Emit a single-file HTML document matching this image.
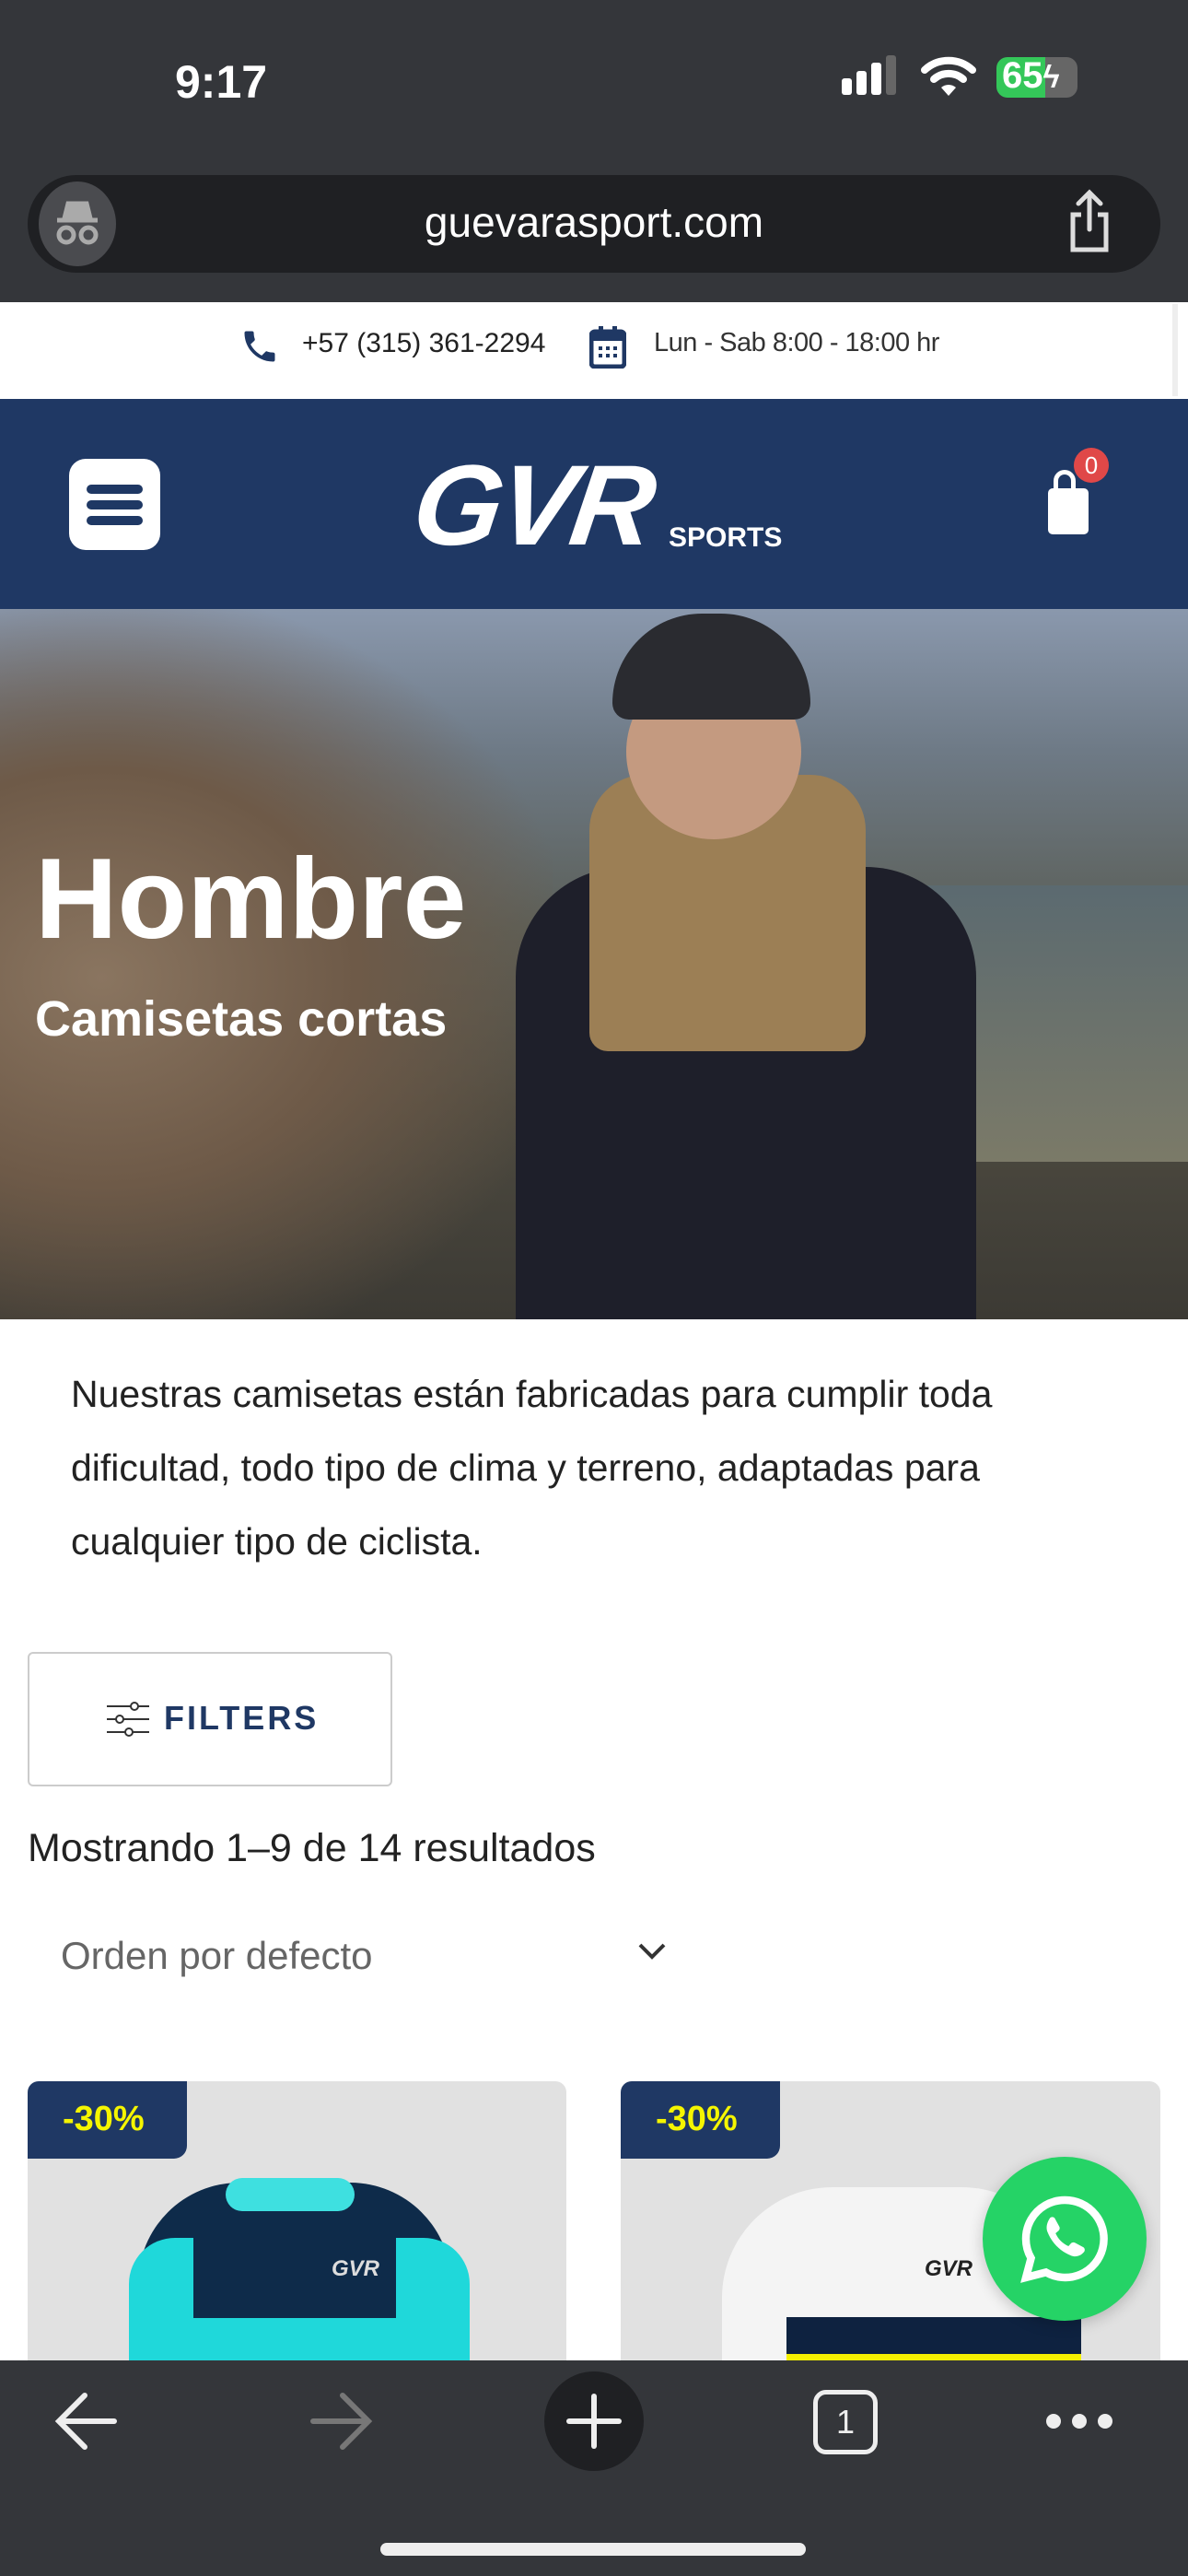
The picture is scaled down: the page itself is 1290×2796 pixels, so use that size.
<!DOCTYPE html>
<html><head><meta charset="utf-8"><style>
*{margin:0;padding:0;box-sizing:border-box}
body{width:1290px;height:2796px;position:relative;overflow:hidden;background:#fff;font-family:"Liberation Sans",sans-serif}
.abs{position:absolute}
</style></head><body>
<div class="abs" style="left:0;top:0;width:1290px;height:328px;background:#34363a"></div>
<div class="abs" style="left:190px;top:60px;font-size:50px;color:#fff;font-weight:600">9:17</div>
<div class="abs" style="left:914px;top:85px;width:11px;height:18px;background:#fff;border-radius:3px"></div>
<div class="abs" style="left:930px;top:77px;width:11px;height:26px;background:#fff;border-radius:3px"></div>
<div class="abs" style="left:946px;top:68px;width:11px;height:35px;background:#fff;border-radius:3px"></div>
<div class="abs" style="left:962px;top:60px;width:11px;height:43px;background:#666;border-radius:3px"></div>
<svg class="abs" style="left:1000px;top:60px" width="60" height="46" viewBox="0 0 60 46"><path d="M4 16 A38 38 0 0 1 56 16" stroke="#fff" stroke-width="8" fill="none" stroke-linecap="round"/><path d="M14 26 A24 24 0 0 1 46 26" stroke="#fff" stroke-width="8" fill="none" stroke-linecap="round"/><path d="M22 35 L30 44 L38 35 A12 12 0 0 0 22 35Z" fill="#fff"/></svg>
<div class="abs" style="left:1082px;top:62px;width:88px;height:44px;border-radius:12px;background:linear-gradient(90deg,#34c759 0 60%,#666 60%)"></div>
<div class="abs" style="left:1088px;top:60px;font-size:40px;font-weight:bold;color:#fff">65<span style="font-size:34px">ϟ</span></div>
<div class="abs" style="left:30px;top:190px;width:1230px;height:106px;border-radius:53px;background:#1f2023"></div>
<div class="abs" style="left:42px;top:197px;width:84px;height:92px;border-radius:50%;background:#4a4b4f"></div>
<svg class="abs" style="left:56px;top:215px" width="56" height="56" viewBox="0 0 56 56"><path d="M18 6h20l4 16H14z M6 24h44" stroke="#aaa" stroke-width="5" fill="#aaa"/><circle cx="16" cy="40" r="8" stroke="#aaa" stroke-width="5" fill="none"/><circle cx="40" cy="40" r="8" stroke="#aaa" stroke-width="5" fill="none"/></svg>
<div class="abs" style="left:0;width:1290px;top:214px;text-align:center;font-size:46px;color:#fff">guevarasport.com</div>
<svg class="abs" style="left:1160px;top:205px" width="46" height="70" viewBox="0 0 46 70"><path d="M23 4v40 M11 16 L23 4 L35 16" stroke="#ddd" stroke-width="5" fill="none" stroke-linecap="round"/><path d="M14 28H5v38h36V28h-9" stroke="#ddd" stroke-width="5" fill="none"/></svg>
<div class="abs" style="left:0;top:328px;width:1290px;height:105px;background:#fff"></div>
<svg class="abs" style="left:260px;top:352px" width="44" height="48" viewBox="0 0 24 24"><path fill="#1f3864" d="M6.6 10.8c1.4 2.8 3.8 5.1 6.6 6.6l2.2-2.2c.3-.3.7-.4 1-.2 1.1.4 2.300.6 3.6.6.6 0 1 .4 1 1V20c0 .6-.4 1-1 1C10.6 21 3 13.4 3 4c0-.6.4-1 1-1h3.5c.6 0 1 .4 1 1 0 1.3.2 2.5.6 3.6.1.3 0 .7-.2 1z"/></svg>
<div class="abs" style="left:328px;top:356px;font-size:30px;color:#222">+57 (315) 361-2294</div>
<svg class="abs" style="left:640px;top:352px" width="40" height="48" viewBox="0 0 20 24"><rect x="1" y="4" width="18" height="19" rx="2" fill="none" stroke="#1f3864" stroke-width="2.5"/><rect x="1" y="4" width="18" height="5" fill="#1f3864"/><rect x="5" y="1" width="2.5" height="5" fill="#1f3864"/><rect x="12.5" y="1" width="2.5" height="5" fill="#1f3864"/><g fill="#1f3864"><rect x="5" y="12" width="2" height="2"/><rect x="9" y="12" width="2" height="2"/><rect x="13" y="12" width="2" height="2"/><rect x="5" y="16" width="2" height="2"/><rect x="9" y="16" width="2" height="2"/><rect x="13" y="16" width="2" height="2"/></g></svg>
<div class="abs" style="left:710px;top:356px;font-size:29px;color:#333;letter-spacing:-0.5px">Lun - Sab 8:00 - 18:00 hr</div>
<div class="abs" style="left:1273px;top:330px;width:6px;height:100px;background:#eee"></div>
<div class="abs" style="left:0;top:433px;width:1290px;height:228px;background:#1f3864"></div>
<div class="abs" style="left:75px;top:498px;width:99px;height:99px;border-radius:18px;background:#fff"></div>
<div class="abs" style="left:94px;top:526px;width:61px;height:10px;border-radius:5px;background:#1f3864"></div>
<div class="abs" style="left:94px;top:543px;width:61px;height:10px;border-radius:5px;background:#1f3864"></div>
<div class="abs" style="left:94px;top:560px;width:61px;height:10px;border-radius:5px;background:#1f3864"></div>
<div class="abs" style="left:450px;top:478px;font-size:124px;font-weight:900;font-style:italic;color:#fff;letter-spacing:-4px;transform:skewX(-8deg)">GVR</div>
<div class="abs" style="left:726px;top:567px;font-size:30px;font-weight:bold;color:#fff">SPORTS</div>
<div class="abs" style="left:1138px;top:530px;width:44px;height:50px;border-radius:5px;background:#fff"></div>
<div class="abs" style="left:1144px;top:510px;width:24px;height:30px;border:5px solid #fff;border-bottom:none;border-radius:12px 12px 0 0"></div>
<div class="abs" style="left:1166px;top:486px;width:38px;height:38px;border-radius:50%;background:#e04848;color:#fff;font-size:26px;text-align:center;line-height:38px">0</div>
<div class="abs" style="left:0;top:661px;width:1290px;height:771px;background:linear-gradient(180deg,#8a98ad 0%,#6e7a86 20%,#5b5f58 45%,#4d4a40 70%,#3c3a34 100%);overflow:hidden">
 <div class="abs" style="left:-100px;top:0;width:700px;height:800px;background:radial-gradient(ellipse at 30% 50%,#8a7560 0%,#6e5a48 40%,rgba(80,70,55,0) 75%)"></div>
 <div class="abs" style="left:700px;top:300px;width:600px;height:300px;background:linear-gradient(180deg,#5b6a70,#7b7a68)"></div>
 <div class="abs" style="left:560px;top:280px;width:500px;height:520px;border-radius:120px 120px 0 0;background:#1e1f2a"></div>
 <div class="abs" style="left:640px;top:180px;width:300px;height:300px;border-radius:60px 60px 20px 20px;background:#9c7f55"></div>
 <div class="abs" style="left:680px;top:60px;width:190px;height:190px;border-radius:50%;background:#c49a80"></div>
 <div class="abs" style="left:665px;top:5px;width:215px;height:115px;border-radius:110px 110px 20px 20px;background:#2a2b30"></div>
</div>
<div class="abs" style="left:38px;top:905px;font-size:124px;font-weight:bold;color:#fff">Hombre</div>
<div class="abs" style="left:38px;top:1075px;font-size:54px;font-weight:bold;color:#fff">Camisetas cortas</div>
<div class="abs" style="left:77px;top:1473px;width:1150px;font-size:41px;line-height:80px;color:#222">Nuestras camisetas están fabricadas para cumplir toda dificultad, todo tipo de clima y terreno, adaptadas para cualquier tipo de ciclista.</div>
<div class="abs" style="left:30px;top:1793px;width:396px;height:146px;border:2px solid #ccc;border-radius:6px"></div>
<svg class="abs" style="left:116px;top:1846px" width="46" height="40" viewBox="0 0 46 40"><g stroke="#333" stroke-width="2" fill="#fff"><line x1="0" y1="6" x2="46" y2="6"/><line x1="0" y1="20" x2="46" y2="20"/><line x1="0" y1="34" x2="46" y2="34"/><circle cx="30" cy="6" r="4"/><circle cx="14" cy="20" r="4"/><circle cx="24" cy="34" r="4"/></g></svg>
<div class="abs" style="left:178px;top:1844px;font-size:36px;font-weight:bold;color:#1f3864;letter-spacing:3px">FILTERS</div>
<div class="abs" style="left:30px;top:1982px;font-size:43px;color:#222">Mostrando 1–9 de 14 resultados</div>
<div class="abs" style="left:66px;top:2099px;font-size:42px;color:#666">Orden por defecto</div>
<svg class="abs" style="left:692px;top:2108px" width="32" height="20" viewBox="0 0 32 20"><path d="M3 3l13 13L29 3" stroke="#333" stroke-width="4" fill="none"/></svg>
<div class="abs" style="left:30px;top:2259px;width:585px;height:320px;background:#e1e1e1;border-radius:12px 12px 0 0;overflow:hidden">
 <div class="abs" style="left:120px;top:110px;width:340px;height:300px;border-radius:110px 110px 0 0;background:#0e2b4a"></div>
 <div class="abs" style="left:215px;top:105px;width:140px;height:36px;border-radius:30px;background:#3ee0e0"></div>
 <div class="abs" style="left:110px;top:170px;width:70px;height:200px;border-radius:50px 0 0 0;background:#1fd8da"></div>
 <div class="abs" style="left:400px;top:170px;width:80px;height:200px;border-radius:0 50px 0 0;background:#1fd8da"></div>
 <div class="abs" style="left:178px;top:257px;width:222px;height:100px;background:#1fd8da"></div>
 <div class="abs" style="left:330px;top:190px;font-size:24px;font-weight:bold;font-style:italic;color:#ddd">GVR</div>
 <div class="abs" style="left:0;top:0;width:173px;height:84px;background:#1f3864;border-radius:0 0 14px 0"></div>
 <div class="abs" style="left:38px;top:20px;font-size:38px;font-weight:bold;color:#f5f500">-30%</div>
</div>
<div class="abs" style="left:674px;top:2259px;width:586px;height:320px;background:#e1e1e1;border-radius:12px 12px 0 0;overflow:hidden">
 <div class="abs" style="left:110px;top:115px;width:380px;height:300px;border-radius:120px 120px 0 0;background:#f4f4f4"></div>
 <div class="abs" style="left:180px;top:256px;width:320px;height:40px;background:#0e2240"></div>
 <div class="abs" style="left:180px;top:296px;width:320px;height:40px;background:#f5f000"></div>
 <div class="abs" style="left:330px;top:190px;font-size:24px;font-weight:bold;font-style:italic;color:#222">GVR</div>
 <div class="abs" style="left:0;top:0;width:173px;height:84px;background:#1f3864;border-radius:0 0 14px 0"></div>
 <div class="abs" style="left:38px;top:20px;font-size:38px;font-weight:bold;color:#f5f500">-30%</div>
</div>
<div class="abs" style="left:1067px;top:2341px;width:178px;height:178px;border-radius:50%;background:#25d366;box-shadow:0 4px 16px rgba(0,0,0,.2)"></div>
<svg class="abs" style="left:1100px;top:2374px" width="112" height="112" viewBox="0 0 32 32"><path d="M16 4A12 12 0 0 0 5.6 22L4 28l6.2-1.6A12 12 0 1 0 16 4z" fill="none" stroke="#fff" stroke-width="2.4"/><path d="M11.5 9.5c.5-.4 1.2-.3 1.5.2l1.4 2.6c.2.5 0 1-.4 1.3l-.8.7c.8 1.8 2.2 3.2 4 4l.7-.8c.3-.4.9-.5 1.3-.3l2.6 1.4c.5.3.6 1 .2 1.5-1 1.2-2.6 1.7-4 1.1-3.4-1.3-6-4-7.3-7.3-.6-1.5-.1-3.1.8-4.4z" fill="#fff"/></svg>
<div class="abs" style="left:0;top:2562px;width:1290px;height:234px;background:#34363a"></div>
<svg class="abs" style="left:58px;top:2596px" width="72" height="64" viewBox="0 0 72 64"><path d="M34 4L6 32l28 28 M6 32h60" stroke="#eee" stroke-width="6" fill="none" stroke-linecap="round"/></svg>
<svg class="abs" style="left:334px;top:2596px" width="72" height="64" viewBox="0 0 72 64"><path d="M38 4l28 28-28 28 M66 32H6" stroke="#777" stroke-width="6" fill="none" stroke-linecap="round"/></svg>
<div class="abs" style="left:591px;top:2574px;width:108px;height:108px;border-radius:50%;background:#1f2023"></div>
<div class="abs" style="left:615px;top:2625px;width:60px;height:6px;background:#eee;border-radius:3px"></div>
<div class="abs" style="left:642px;top:2598px;width:6px;height:60px;background:#eee;border-radius:3px"></div>
<div class="abs" style="left:883px;top:2594px;width:70px;height:70px;border:5px solid #eee;border-radius:14px;color:#eee;font-size:36px;text-align:center;line-height:60px">1</div>
<div class="abs" style="left:1136px;top:2620px;width:16px;height:16px;border-radius:50%;background:#eee"></div>
<div class="abs" style="left:1164px;top:2620px;width:16px;height:16px;border-radius:50%;background:#eee"></div>
<div class="abs" style="left:1192px;top:2620px;width:16px;height:16px;border-radius:50%;background:#eee"></div>
<div class="abs" style="left:413px;top:2760px;width:462px;height:14px;border-radius:7px;background:#eee"></div>
</body></html>
